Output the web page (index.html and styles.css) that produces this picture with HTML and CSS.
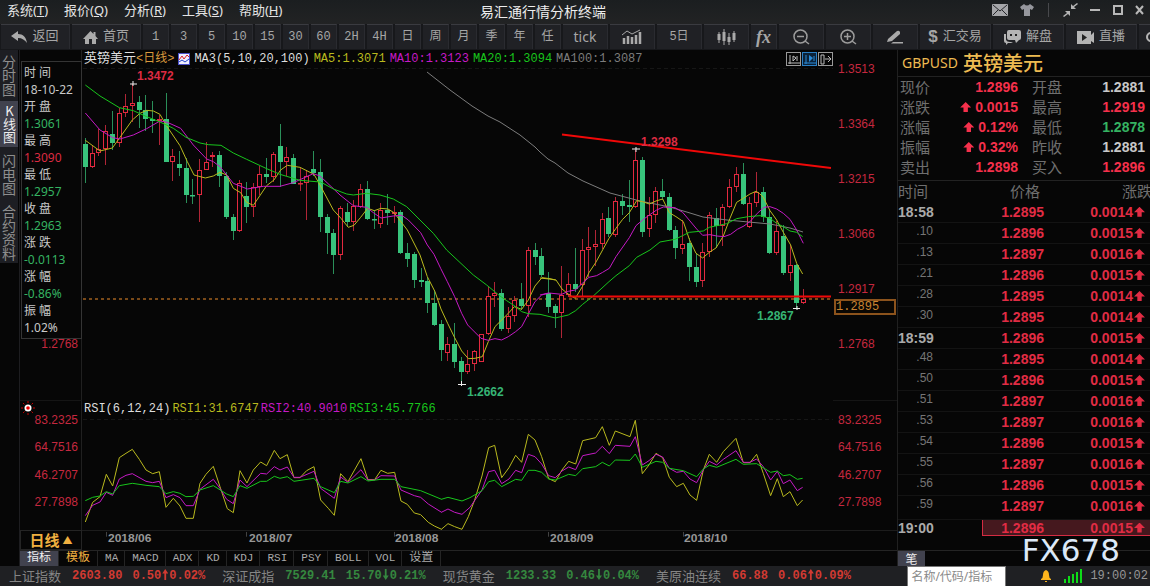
FILE: index.html
```html
<!DOCTYPE html>
<html lang="zh-CN">
<head>
<meta charset="utf-8">
<title>易汇通行情分析终端</title>
<link rel="stylesheet" href="styles.css">
</head>
<body>
<div class="app">
  <header class="titlebar">
    <nav class="menu">
      <button>系统(<u>T</u>)</button><button>报价(<u>Q</u>)</button><button>分析(<u>R</u>)</button><button>工具(<u>S</u>)</button><button>帮助(<u>H</u>)</button>
    </nav>
    <h1 class="app-title">易汇通行情分析终端</h1>
    <div class="window-tools">
      <button aria-label="邮件"><svg width="16" height="12" viewBox="0 0 16 12"><rect width="16" height="12" rx="1" fill="#a5a6a9"/><path d="M1 1l7 6 7-6M1 11l5-5M15 11l-5-5" stroke="#26272b" fill="none"/></svg></button>
      <button aria-label="皮肤"><svg width="14" height="12" viewBox="0 0 14 12"><path d="M4 0q3 3 6 0l4 3-2 3-2-1v7H4V5L2 6 0 3z" fill="#96979d"/></svg></button>
      <span class="divider"></span>
      <button aria-label="收缩"><svg width="15" height="14" viewBox="0 0 15 14"><path d="M8 6V1l2 2 4-3 1 1-4 3 2 2zM7 8v5l-2-2-4 3-1-1 4-3-2-2z" fill="#b4b4b4"/></svg></button>
      <button aria-label="最小化"><svg width="11" height="12"><path d="M0 6h10" stroke="#b8b8b8" stroke-width="2"/></svg></button>
      <button aria-label="最大化"><svg width="10" height="10"><rect x="1" y="1" width="8" height="8" fill="none" stroke="#b8b8b8" stroke-width="2"/></svg></button>
      <button aria-label="关闭"><svg width="9" height="10"><path d="M1 1l7 8M8 1L1 9" stroke="#b8b8b8" stroke-width="2"/></svg></button>
    </div>
  </header>

  <nav class="toolbar">
    <button class="tool nav"><svg width="16" height="12" viewBox="0 0 16 12"><path d="M0 5L7 0v3c5 0 8 3 9 9-2-3-5-5-9-5v3z" fill="#aaa"/></svg>返回</button>
    <button class="tool nav"><svg width="15" height="13" viewBox="0 0 15 13"><path d="M7.500 0l3 3V1h2v4L15 8h-2v5H9V8H6v5H2V8H0z" fill="#aaa"/></svg>首页</button>
    <button class="tool">1</button><button class="tool">3</button><button class="tool">5</button><button class="tool">10</button><button class="tool">15</button><button class="tool">30</button><button class="tool">60</button><button class="tool">2H</button><button class="tool">4H</button><button class="tool">日</button><button class="tool">周</button><button class="tool">月</button><button class="tool">季</button><button class="tool">年</button><button class="tool">任</button>
    <button class="tool mid latin">tick</button>
    <button class="tool mid" aria-label="指标图"><svg width="20" height="16" viewBox="0 0 20 16"><path d="M2 15V9M6 15V7M10 15V8M14 15V6M18 15V3" stroke="#aaa" stroke-width="2.500"/><path d="M0 6l5-4 5 3 8-4" stroke="#aaa" fill="none"/></svg></button>
    <button class="tool mid">5日</button>
    <button class="tool mid" aria-label="K线"><svg width="19" height="16" viewBox="0 0 19 16"><path d="M2 3v11M7 0v16M12 4v12M17 2v11" stroke="#aaa"/><path d="M2 5v6M7 3v9M12 8v5M17 4v7" stroke="#aaa" stroke-width="3"/></svg></button>
    <button class="tool fx">fx</button>
    <button class="tool mid" aria-label="缩小"><svg width="17" height="16" viewBox="0 0 17 16"><circle cx="7.500" cy="7.500" r="6.500" stroke="#9c9c9c" fill="none" stroke-width="1.500"/><path d="M4 7.500h7M12 12l4 3" stroke="#9c9c9c" stroke-width="1.500"/></svg></button>
    <button class="tool mid" aria-label="放大"><svg width="17" height="16" viewBox="0 0 17 16"><circle cx="7.500" cy="7.500" r="6.500" stroke="#9c9c9c" fill="none" stroke-width="1.500"/><path d="M4 7.500h7M7.500 4v7M12 12l4 3" stroke="#9c9c9c" stroke-width="1.500"/></svg></button>
    <button class="tool mid" aria-label="画线"><svg width="16" height="14" viewBox="0 0 16 14"><path d="M1 9l9-8q2-1 3 1v2l-8 7-5 1zM6 12h10v1.500H4z" fill="#aaa"/></svg></button>
    <button class="tool wide"><b class="dollar">$</b>汇交易</button>
    <button class="tool wide"><svg width="17" height="15" viewBox="0 0 17 15"><path d="M5 0h10q2 0 2 2v6q0 2-2 2l-3 3-1-3H5q-2 0-2-2V2q0-2 2-2zM0 4h2v6q1 2 4 2h3l-2 1H4l-2 2v-2q-2 0-2-2z" fill="#b4b4b4"/><path d="M7 4v2M12 4v2" stroke="#222" stroke-width="2"/></svg>解盘</button>
    <button class="tool wide"><svg width="17" height="13" viewBox="0 0 17 13"><path d="M0 0h14v4l3-3v11l-3-2v3H0z" fill="#b4b4b4"/><path d="M5 3l5 3.500L5 10z" fill="#222"/></svg>直播</button>
    <button class="tool cut" aria-label="更多"><svg width="12" height="12"><circle cx="6" cy="6" r="4" stroke="#b4b4b4" stroke-width="2" fill="none"/></svg></button>
  </nav>

  <main class="workspace">
    <nav class="side-tabs"><button>分时图</button><button class="active">K线图</button><button>闪电图</button><button>合约资料</button></nav>

    <section class="chart">
      <div class="axis left price"><span>1.2768</span></div>
      <div class="pane">
        <div class="legend">
          <span class="white han">英镑美元<span class="amber">&lt;日线&gt;</span></span>
          <svg class="legend-icon" width="12" height="12"><rect x=".5" y=".5" width="11" height="11" fill="#eef" stroke="#4a50c8"/><path d="M1 7l3-4 2 3 3-4 2 2" stroke="#d22" fill="none"/><path d="M1 9l3-2 3 2 4-3" stroke="#24c" fill="none"/></svg>
          <span class="white">MA3(5,10,20,100)</span><span class="yellow">MA5:1.3071</span><span class="magenta">MA10:1.3123</span><span class="green">MA20:1.3094</span><span class="gray">MA100:1.3087</span>
          <span class="view-buttons">
            <button aria-label="左对齐"><svg width="14" height="13"><path d="M3 2v9M1 10h12M10 3v5M6 3v5M6 3l3 2-3 3" stroke="#bbb" fill="none"/></svg></button>
            <button class="on" aria-label="播放"><svg width="14" height="13"><path d="M3 2v9M1 10h12M11 3v5" stroke="#2a8ad8" fill="none"/><path d="M6 2l4 3-4 4z" fill="#2a8ad8"/></svg></button>
            <button aria-label="右移"><svg width="14" height="13"><path d="M2 2h3v9H2zM6 6h6M9 3l3 3-3 3" stroke="#bbb" fill="none"/></svg></button>
          </span>
        </div>
        <svg class="plot" viewBox="82 50 751 350" preserveAspectRatio="none">
          <path d="M83 68.500H833" stroke="#161616" stroke-dasharray="4 3"/>
          <path d="M83 299H833" stroke="#a0601f" stroke-width="1.500" stroke-dasharray="3 3"/>
          <g id="candles"></g>
          <polyline class="line gray" points="427,72 450,90 472,106 488,116 500,122 520,135 535,147 540,152 548,159 555,163 568,173 583,181 610,193 640,201 670,207 690,213 703,217 727,220 770,224 790,228 803,232"/>
          <g class="line yellow">
            <polyline transform="translate(80 60) scale(.3333)" points="16,241 60,273 97,264 118,235 157,180 180,160 200,151 220,153 240,163 258,195 300,257 322,305 342,345 376,354 400,348 420,337 440,345 460,385 482,398 500,427 520,436 560,377 582,360 602,330 622,316 660,322 702,343 720,375"/>
            <polyline transform="translate(320 160) scale(.3333)" points="0,75 40,150 63,175 85,202 102,196 122,172 143,145 163,152 183,145 204,147 222,158 262,210 300,285 322,350 345,395 363,447 383,490 404,533 425,573 445,596 465,595 487,590 505,545 525,500 565,460 583,440 605,448 625,420 645,378 666,353 690,356 707,360"/>
            <polyline transform="translate(540 110) scale(.3333)" points="0,504 26,507 48,510 66,537 88,555 106,565 127,530 147,488 167,458 207,385 228,355 248,328 268,308 290,272 308,275 328,282 348,273 368,267 388,308 408,320 430,335 448,388 468,430 488,444 508,427 528,414 550,378 570,325 590,277 610,265 630,252 648,244 658,250 670,262 690,302 710,330 730,367 752,405 770,460 788,492"/>
          </g>
          <g class="line magenta">
            <polyline transform="translate(80 60) scale(.3333)" points="16,159 60,210 98,233 120,237 160,225 200,206 240,183 262,187 302,205 340,255 380,297 400,305 420,320 460,370 502,387 550,379 600,379 640,368 700,341 720,348"/>
            <polyline transform="translate(320 160) scale(.3333)" points="0,48 60,105 100,137 140,142 160,158 183,174 220,168 245,166 265,180 302,218 322,255 342,283 362,325 382,365 404,410 425,460 443,495 483,535 505,541 525,536 545,540 565,530 587,515 605,500 625,462 645,425 665,405 685,400"/>
            <polyline transform="translate(540 110) scale(.3333)" points="0,555 26,549 65,553 85,544 106,540 127,520 147,502 170,497 188,487 208,475 228,440 268,383 288,347 308,330 328,315 350,300 370,291 405,293 428,307 450,333 470,357 488,376 510,374 530,378 552,380 572,373 592,358 612,348 632,333 652,310 672,292 690,290 710,297 730,310 750,328 770,360 790,400"/>
          </g>
          <g class="line green">
            <polyline transform="translate(80 60) scale(.3333)" points="16,75 60,108 118,143 160,152 200,170 240,186 280,205 318,232 360,249 385,254 423,256 460,279 500,298 560,326 600,343 660,361 720,366"/>
            <polyline transform="translate(320 160) scale(.3333)" points="0,65 40,87 80,102 100,105 140,100 180,105 220,117 260,140 300,180 340,220 380,270 460,345 500,375 540,408 560,422 587,440 605,455 625,461 660,463"/>
            <polyline transform="translate(540 110) scale(.3333)" points="0,613 46,624 85,615 107,602 128,583 160,558 207,515 228,497 268,467 290,442 330,420 360,396 405,388 428,377 448,367 490,363 508,352 560,341 590,326 625,320 660,317 690,325 710,340 730,350 750,363 770,367 788,380"/>
          </g>
          <path d="M562 134.500L831 168M569 296.500H831" stroke="#f00808" stroke-width="2"/>
          <path d="M130 84h7M133 81v5M458 384.500h8M461.500 381v5M632 149h8M636 147v5M793 308.500h7M797 306v4" stroke="#eee"/>
          <g class="marks"><text x="137" y="80" class="up">1.3472</text><text x="641" y="146" class="up">1.3298</text><text x="467" y="396" class="down">1.2662</text><text x="757" y="320" class="down">1.2867</text></g>
        </svg>
      </div>
      <div class="axis right price"><span>1.3513</span><span>1.3364</span><span>1.3215</span><span>1.3066</span><span>1.2917</span><span>1.2768</span><output class="last-price">1.2895</output></div>

      <div class="axis left rsi">
        <svg class="sun" width="14" height="14" viewBox="-7 -7 14 14"><path d="M0-7v14M-7 0H7M-5-5L5 5M5-5L-5 5" stroke="#c00" stroke-dasharray="2 10 2"/><circle r="3.500" fill="#fff"/><circle r="1.800" fill="#e00"/></svg>
        <span>83.2325</span><span>64.7516</span><span>46.2707</span><span>27.7898</span>
      </div>
      <div class="pane">
        <div class="legend rsi-legend"><span class="white">RSI(6,12,24)</span><span class="yellow">RSI1:31.6747</span><span class="magenta">RSI2:40.9010</span><span class="green">RSI3:45.7766</span></div>
        <svg class="plot" viewBox="82 400 751 130" preserveAspectRatio="none">
          <path d="M83 419.500H833" stroke="#161616" stroke-dasharray="4 3"/>
          <g class="line yellow">
            <polyline transform="translate(0 380) scale(.3333)" points="256,426 278,367 300,350 319,283 338,318 358,233 378,220 397,208 418,238 438,270 458,281 478,275 498,382 520,355 540,378 558,415 580,415 600,310 618,283 640,259 660,320 682,386 700,398 720,272 741,309 760,270 782,246 800,257 823,211 840,236 862,224 882,293 900,293 920,272 942,260 962,360 985,385 1003,406 1022,281 1044,305 1062,273 1083,236 1104,299 1124,299 1143,271 1163,280 1184,277 1203,363 1222,373 1243,399 1262,404 1285,427 1303,438 1325,448"/>
            <polyline transform="translate(440 400) scale(.3333)" points="4,388 24,371 44,380 66,388 85,350 104,300 126,228 146,143 164,136 185,233 207,203 227,166 245,187 265,103 285,120 305,170 326,236 346,245 366,210 386,184 407,192 428,122 467,113 487,80 508,136 526,93 570,110 586,61 607,221 627,195 648,160 668,173 688,232 710,260 730,250 750,285 770,301 790,210 808,163 830,187 850,155 888,115 910,188 930,188 950,163 970,220 992,287 1012,236 1030,290 1050,275 1072,317 1088,300"/>
          </g>
          <g class="line magenta">
            <polyline transform="translate(0 380) scale(.3333)" points="256,407 278,376 300,366 319,337 338,346 358,297 378,286 397,281 438,304 458,308 478,304 498,353 520,344 540,353 558,377 580,377 600,328 640,298 660,325 680,358 700,371 720,300 741,320 782,280 800,282 823,260 840,270 862,261 882,292 900,292 942,274 962,325 1003,355 1022,291 1044,307 1083,269 1104,300 1124,300 1143,287 1184,288 1203,330 1243,347 1262,352 1285,372 1325,397"/>
            <polyline transform="translate(440 400) scale(.3333)" points="4,337 24,327 44,337 66,343 90,322 126,270 146,215 164,211 185,251 207,237 227,211 245,218 265,163 285,170 305,192 326,227 346,233 366,213 386,201 407,209 428,167 467,159 487,139 508,161 526,136 570,139 586,110 607,195 627,182 648,163 668,171 688,205 710,217 730,214 750,237 770,248 790,210 808,184 830,195 850,178 888,152 910,187 930,187 950,177 970,200 992,240 1012,214 1030,251 1050,240 1072,272 1088,262"/>
          </g>
          <g class="line green">
            <polyline transform="translate(0 380) scale(.3333)" points="256,362 278,352 300,348 319,335 338,342 358,317 397,310 438,316 478,320 498,341 520,335 540,340 558,350 580,349 600,330 640,317 680,342 700,350 720,317 741,325 782,304 800,304 823,289 840,295 862,290 882,304 942,295 962,320 1003,338 1022,304 1044,309 1083,290 1104,303 1143,298 1184,298 1203,320 1262,332 1325,358"/>
            <polyline transform="translate(440 400) scale(.3333)" points="4,298 24,292 66,303 90,293 126,272 146,245 164,241 185,260 227,238 245,241 265,211 285,211 305,217 326,237 346,240 386,223 407,227 428,206 467,200 487,187 508,198 526,180 570,181 586,162 607,202 648,184 668,187 688,205 730,212 770,230 790,207 808,196 830,202 888,178 910,193 950,191 992,217 1012,213 1030,227 1050,224 1072,238 1088,235"/>
          </g>
        </svg>
      </div>
      <div class="axis right rsi"><span>83.2325</span><span>64.7516</span><span>46.2707</span><span>27.7898</span></div>

      <button class="period">日线<span class="tri">▲</span></button>
      <div class="pane dates">
        <svg class="plot" viewBox="82 530 751 20" preserveAspectRatio="none">
          <path d="M106.500 531v5M246.500 531v5M394.500 531v5M548.500 531v5M683.500 531v5" stroke="#444"/>
          <g class="date-text"><text x="108" y="542">2018/06</text><text x="249" y="542">2018/07</text><text x="395" y="542">2018/08</text><text x="550" y="542">2018/09</text><text x="684" y="542">2018/10</text></g>
        </svg>
      </div>
      <div class="dates"></div>

      <nav class="indicator-tabs"><button class="active">指标</button><button class="gold">模板</button><button>MA</button><button>MACD</button><button>ADX</button><button>KD</button><button>KDJ</button><button>RSI</button><button>PSY</button><button>BOLL</button><button>VOL</button><button>设置</button></nav>

      <aside class="info-box">
        <span>时 间</span><span>18-10-22</span><span>开 盘</span><span class="down">1.3061</span><span>最 高</span><span class="up">1.3090</span><span>最 低</span><span class="down">1.2957</span><span>收 盘</span><span class="down">1.2963</span><span>涨 跌</span><span class="down">-0.0113</span><span>涨 幅</span><span class="down">-0.86%</span><span>振 幅</span><span>1.02%</span>
      </aside>
    </section>

    <section class="quote">
      <h2><span class="code">GBPUSD</span><span>英镑美元</span></h2>
      <table class="summary">
        <tr><th>现价</th><td class="up">1.2896</td><th>开盘</th><td>1.2881</td></tr>
        <tr><th>涨跌</th><td class="up"><i class="arrow"></i>0.0015</td><th>最高</th><td class="up">1.2919</td></tr>
        <tr><th>涨幅</th><td class="up"><i class="arrow"></i>0.12%</td><th>最低</th><td class="down">1.2878</td></tr>
        <tr><th>振幅</th><td class="up"><i class="arrow"></i>0.32%</td><th>昨收</th><td>1.2881</td></tr>
        <tr><th>卖出</th><td class="up">1.2898</td><th>买入</th><td class="up">1.2896</td></tr>
      </table>
      <table class="ticks">
        <thead><tr><th>时间</th><th>价格</th><th>涨跌</th></tr></thead>
        <tbody id="ticks"></tbody>
      </table>
      <span class="watermark">FX678</span>
      <div class="quote-tabs"><button>笔</button></div>
    </section>
  </main>

  <footer class="status">
    <span class="name">上证指数</span><span class="rise">2603.80</span><span class="rise chg">0.50<i class="thin-arrow"></i>0.02%</span>
    <span class="name">深证成指</span><span class="fall">7529.41</span><span class="fall chg">15.70<i class="thin-arrow"></i>0.21%</span>
    <span class="name">现货黄金</span><span class="fall">1233.33</span><span class="fall chg">0.46<i class="thin-arrow"></i>0.04%</span>
    <span class="name">美原油连续</span><span class="rise">66.88</span><span class="rise chg">0.06<i class="thin-arrow"></i>0.09%</span>
    <div class="status-right">
      <input type="text" aria-label="搜索" placeholder="名称/代码/指标">
      <svg class="bell" width="10" height="12" viewBox="0 0 10 12"><path d="M5 0q3 1 3 5 0 3 2 4v1H0V9q2-1 2-4 0-4 3-5zM4 11h2v1H4z" fill="#ffb51c"/></svg>
      <svg class="signal" width="18" height="14" viewBox="0 0 18 14"><path d="M1 14v-4M5 14V7M9 14V5M13 14V3M17 14V0" stroke="#0edc18" stroke-width="2"/></svg>
      <time>19:00:02</time>
    </div>
  </footer>
</div>
<script src="app.js"></script>
</body>
</html>
```

FILE: styles.css
```css
* { box-sizing: border-box; }
body { margin: 0; background: #060606; color: #c8c8c8; font: 12px "Liberation Sans", "Noto Sans CJK SC", sans-serif; }
button { background: none; border: 0; padding: 0; color: inherit; font: inherit; white-space: nowrap; }
button svg { display: block; flex: none; }
i { font-style: normal; }
.app { min-height: 100vh; display: flex; flex-direction: column; overflow: hidden; }

.titlebar { height: 24px; flex: none; display: grid; grid-template-columns: 1fr auto 1fr; align-items: center; background: linear-gradient(#1b1e20, #222324); }
.menu { display: flex; gap: 16px; padding-left: 7px; margin-bottom: 4px; font: 13px/20px "Noto Sans", "Noto Sans CJK SC", sans-serif; color: #e4e4e4; }
.app-title { margin: 0 64px 2px 0; font: 14px/20px "Noto Sans CJK SC", sans-serif; color: #eee; }
.window-tools { display: flex; justify-content: flex-end; align-items: center; gap: 12px; padding: 0 6px 4px 0; }
.divider { width: 1px; height: 14px; background: #48494c; margin: 0 2px; }

.toolbar { height: 26px; flex: none; display: flex; gap: 2px; padding: 0 0 1px 1px; background: #17181b; overflow: hidden; color: #a6a6a6; font: 12px/22px "Liberation Mono", "Noto Sans CJK SC", sans-serif; }
.tool { flex: 1 0 26px; display: flex; align-items: center; justify-content: center; gap: 4px; background: #202125; border-top: 1px solid #3a3b40; border-right: 1px solid #2a2b30; }
.tool.nav { flex-basis: 69px; gap: 5px; font-size: 13px; }
.tool.mid { flex-basis: 45px; }
.tool.wide { flex-basis: 71px; gap: 5px; font-size: 13px; }
.tool.cut { flex-basis: 40px; justify-content: flex-start; padding-left: 6px; }
.tool.latin { font: 14px/22px "Noto Sans", sans-serif; }
.tool.fx { font: italic bold 18px "Liberation Serif", serif; }
.dollar { font: bold 17px "Liberation Sans", sans-serif; }

.workspace { flex: 1; display: grid; grid-template-columns: 20px minmax(0, 1fr) 253px; }
.side-tabs { display: flex; flex-direction: column; border-right: 1px solid #1d1d20; }
.side-tabs button { writing-mode: vertical-rl; text-orientation: upright; background: #1d1e23; color: #8e8e8e; font: 14px/18px "Noto Sans CJK SC", sans-serif; height: 56px; width: 18px; }
.side-tabs button:first-child { height: 51px; }
.side-tabs .active { background: #41424e; color: #eee; height: 46px; font-size: 13px; }
.side-tabs button:last-child { height: 60px; }

.chart { position: relative; display: grid; grid-template-columns: 62px minmax(0, 1fr) 64px; grid-template-rows: 350fr 130fr 20px 16px; }
.axis { position: relative; display: flex; flex-direction: column; justify-content: space-between; color: #c5283f; font-size: 12px; line-height: 16px; }
.axis.price { padding-top: 11px; padding-bottom: 48px; }
.axis.rsi { padding-top: 11px; padding-bottom: 20px; border-top: 1px solid #151515; }
.axis.left { text-align: right; padding-right: 3px; border-right: 1px solid #202020; }
.axis.left.price { justify-content: flex-end; }
.axis.right { padding-left: 5px; }
.last-price { position: absolute; left: 1px; right: 1px; top: 249px; height: 16px; border: 2px solid #8c531c; background: #0a0703; color: #c98432; font: 12px/12px "Liberation Mono", monospace; }
.sun { position: absolute; left: 1px; top: 0; }
.pane { position: relative; min-height: 0; }
.plot { position: absolute; left: 0; top: 0; width: 100%; height: 100%; display: block; }
.legend { position: relative; z-index: 1; display: flex; align-items: center; gap: 4px; padding-left: 2px; height: 18px; font: 12px/18px "Liberation Mono", monospace; white-space: nowrap; }
.rsi-legend { gap: 2px; }
.legend .han { font: 13px/18px "Liberation Mono", "Noto Sans CJK SC", monospace; }
.legend .amber { font-size: 12px; }
.white { color: #ddd; } .amber { color: #d99a3d; } .yellow { color: #b9b91e; } .magenta { color: #c51ac5; } .green { color: #18c51c; } .gray { color: #7c7c7c; }
.view-buttons { display: flex; gap: 1px; margin-left: auto; }
.view-buttons button { border: 1px solid #999; width: 15px; height: 14px; overflow: hidden; }
.view-buttons .on { border-color: #2a7fc5; background: #0b2238; }
.line { fill: none; stroke: currentColor; stroke-width: 1; }
.line polyline, polyline.line { vector-effect: non-scaling-stroke; }
.marks { font: bold 12px "Liberation Sans", sans-serif; }
.up { color: #f5304b; fill: #dc2b42; }
.down { color: #35b362; fill: #36b474; }
.c-up { fill: #060606; stroke: #e3293f; }
.c-down { fill: #38c47c; stroke: #38c47c; }
.wick-up { stroke: #b02536; }
.wick-down { stroke: #2a8f59; }
.period { border: 1px solid #242424; color: #f0b040; font: bold 15px/18px "Noto Sans CJK SC", sans-serif; display: flex; align-items: center; justify-content: center; gap: 3px; }
.tri { font-size: 10px; }
.dates { border-top: 1px solid #1c1c1c; }
.date-text { font: bold 12px "Liberation Sans", sans-serif; fill: #979797; }
.indicator-tabs { grid-column: 1 / -1; display: flex; border-top: 1px solid #242424; color: #aaa; font: 11px/15px "Liberation Mono", "Noto Sans CJK SC", monospace; overflow: hidden; }
.indicator-tabs button { padding: 0 6px 0 7px; border-right: 1px solid #242424; }
.indicator-tabs .active { background: #41424e; color: #eee; }
.indicator-tabs .active, .indicator-tabs .gold, .indicator-tabs button:last-child { font-size: 12px; padding: 0 7px; }
.gold { color: #f0b040; }
.info-box { position: absolute; left: 1px; top: 11px; width: 61px; display: flex; flex-direction: column; padding: 2px; border: 1px solid #343434; background: #060606; font: 12px/17px "Noto Sans", "Noto Sans CJK SC", sans-serif; white-space: nowrap; }
.info-box .up { color: #dc2b42; }

.quote { position: relative; min-width: 0; overflow: hidden; border-left: 1px solid #202020; display: flex; flex-direction: column; }
.quote h2 { margin: 0; height: 27px; padding-left: 4px; display: flex; align-items: center; gap: 5px; color: #eebb52; font: 500 20px/26px "Noto Sans CJK SC", sans-serif; border-bottom: 1px solid #222; }
.quote .code { font: 14px/26px "Noto Sans", sans-serif; }
table { border-collapse: collapse; width: 100%; table-layout: fixed; }
th { font: 15px/20px "Noto Sans CJK SC", sans-serif; color: #6f6f6f; text-align: left; padding: 0; }
td { font: bold 14px/20px "Liberation Sans", sans-serif; text-align: right; padding: 0; }
.summary { margin: 0 0 3px; }
.summary th { width: 36px; padding-left: 2px; height: 20px; }
.summary th:nth-child(3) { width: 44px; padding-left: 14px; }
.summary td { padding-right: 5px; }
.summary td:nth-child(2) { padding-right: 0; width: 84px; }
.arrow { display: inline-block; width: 11px; height: 10px; margin-right: 4px; background: currentColor; clip-path: polygon(50% 0, 100% 55%, 70% 55%, 70% 100%, 30% 100%, 30% 55%, 0 55%); }
.ticks { border-top: 1px solid #222; }
.ticks th { height: 21px; }
.ticks th:nth-child(1) { width: 84px; }
.ticks th:nth-child(2) { width: 62px; padding-left: 28px; }
.ticks th:nth-child(3) { padding-left: 78px; overflow: hidden; white-space: nowrap; }
.ticks td { height: 21px; line-height: 20px; border-bottom: 1px solid #131313; color: #e12c44; }
.ticks td:first-child { color: #aaa; padding-right: 49px; }
.ticks td.sec { color: #757575; font: 12px/16px "Liberation Sans", sans-serif; vertical-align: top; }
.ticks td:last-child { padding-right: 5px; }
.ticks .arrow { margin: 0 0 0 1px; }
.ticks tr:nth-last-child(2) td { height: 24px; vertical-align: top; }
.ticks .now td { height: 16px; line-height: 14px; border-bottom: 0; }
.ticks .now td + td { background: #45181e; border: 1px solid #d42b42; border-width: 1px 0; }
.ticks .now td:nth-child(2) { border-left-width: 1px; }
.watermark { position: absolute; right: 30px; bottom: 0; color: #dce9f8; font: 31px/32px "DejaVu Sans", sans-serif; }
.quote-tabs { margin-top: auto; height: 16px; border-top: 1px solid #242424; }
.quote-tabs button { display: block; width: 27px; height: 15px; background: #41424e; color: #eee; font: 12px/15px "Noto Sans CJK SC", sans-serif; }

.status { height: 20px; flex: none; display: flex; align-items: center; padding-left: 9px; background: #1f2023; font: bold 12px/20px "Liberation Mono", monospace; white-space: nowrap; }
.name { color: #858585; font: 13px/20px "Noto Sans CJK SC", sans-serif; margin-right: 11px; }
.rise { color: #d23a32; } .fall { color: #35883f; }
.chg { margin: 0 17px 0 10px; }
.thin-arrow { display: inline-block; width: 6px; height: 11px; margin: 0 1px; background: currentColor; vertical-align: -1px; clip-path: polygon(50% 0, 100% 40%, 65% 40%, 65% 100%, 35% 100%, 35% 40%, 0 40%); }
.fall .thin-arrow { clip-path: polygon(50% 100%, 100% 60%, 65% 60%, 65% 0, 35% 0, 35% 60%, 0 60%); }
.status-right { margin-left: auto; display: flex; align-items: center; padding-right: 2px; font-weight: normal; color: #969696; }
.status input { width: 99px; height: 20px; border: 1px solid #777; border-bottom: 0; background: #fff; padding: 0 3px; font: 12px "Noto Sans", "Noto Sans CJK SC", sans-serif; }
.status input::placeholder { color: #8a8a8a; }
.bell { margin: 0 13px 0 35px; }
.signal { margin-right: 8px; }
```

FILE: app.js
```js
// Candle rows: direction, body top, body bottom, high, low (three units per pixel, from the given base line).
const candleSets = [
  { base: 60, rows: "D252,322,234,368 U280,322,257,325 U268,280,208,287 U213,268,195,314 D222,250,152,270 U160,250,145,260 U139,160,102,170 U128,139,73,185 D126,150,108,203 D150,176,104,212 D177,184,122,218 U178,184,165,254 D178,307,98,307 U289,307,267,362 D312,325,273,347 D324,405,295,430 D405,407,357,433 U331,405,297,485 U307,331,246,331 U285,292,276,320 D285,349,273,380 D347,471,335,478 D471,514,461,541 U370,514,360,517 D409,442,366,490 U382,442,368,470 U343,382,318,405 D342,352,294,368 U283,352,275,365 D258,307,192,382 U292,307,261,348 D294,371,283,373 U369,371,325,394 U349,370,331,481 D327,338,273,348 D336,471,297,517 D471,520,463,583 D518,586,506,642" },
  { base: 160, rows: "U143,286,138,300 D155,187,128,200 U137,187,120,214 U87,140,71,145 D87,178,62,180 D177,181,150,206 U150,193,128,205 D150,160,103,196 U157,163,138,190 D155,280,150,282 D279,297,249,322 D283,361,275,384 D360,366,325,382 D364,430,350,460 D428,496,390,498 D493,570,480,603 U553,580,530,603 D553,605,490,624 D604,636,590,675 U613,635,571,642 U574,613,570,634 U521,605,521,607 U408,521,380,525 U399,408,367,440 D398,508,386,514 U469,508,440,520 U420,468,407,486 D418,438,370,450 U270,438,260,470 D269,290,248,315 D287,346,265,350 D398,440,335,458 D438,458,433,505 U404,458,317,535" },
  { base: 110, rows: "U523,555,490,560 D523,538,415,545 U420,525,388,560 U411,420,350,500 U402,411,360,468 U328,402,308,418 D325,373,290,380 U272,376,262,382 D272,287,253,315 D285,290,209,337 U150,290,120,295 D150,367,140,382 U316,358,260,382 U243,316,230,340 D243,262,206,270 D262,360,248,362 D360,414,347,446 U402,418,330,433 D398,471,385,512 D471,515,430,530 U427,513,400,530 U315,427,307,440 D325,348,295,415 U291,348,281,408 U230,292,206,295 U193,230,170,245 D191,281,158,285 U280,352,262,355 U246,280,185,290 D246,322,230,337 D320,430,300,432 U363,430,332,434 D377,490,345,496 U466,490,405,514 D466,578,462,598 U566,579,536,582" }
];
const step = 6.71;
let index = 0;
let markup = "";
for (const set of candleSets) {
  for (const row of set.rows.split(" ")) {
    const kind = row[0] === "U" ? "up" : "down";
    const [top, bottom, high, low] = row.slice(1).split(",").map(v => Math.round(set.base + v / 3));
    const x = Math.round(85 + step * index++) + 0.5;
    markup += `<path class="wick-${kind}" d="M${x} ${high}V${low}"/>`;
    markup += `<rect class="c-${kind}" x="${x - 2}" y="${top + 0.5}" width="4" height="${Math.max(bottom - top - 1, 0.5)}"/>`;
  }
}
document.getElementById("candles").innerHTML = markup;

const ticks = [
  ["18:58", 5], [".10", 6], [".13", 7], [".21", 6], [".28", 5], [".30", 5], ["18:59", 6], [".48", 5],
  [".50", 6], [".51", 7], [".53", 7], [".54", 6], [".55", 7], [".56", 6], [".59", 7], ["19:00", 6]
];
document.getElementById("ticks").innerHTML = ticks.map(([time, digit], i) =>
  `<tr class="${i === ticks.length - 1 ? "now" : ""}"><td class="${time[0] === "." ? "sec" : "min"}">${time}</td>` +
  `<td>1.289${digit}</td><td>0.001${digit - 1}<i class="arrow"></i></td></tr>`).join("");
```
